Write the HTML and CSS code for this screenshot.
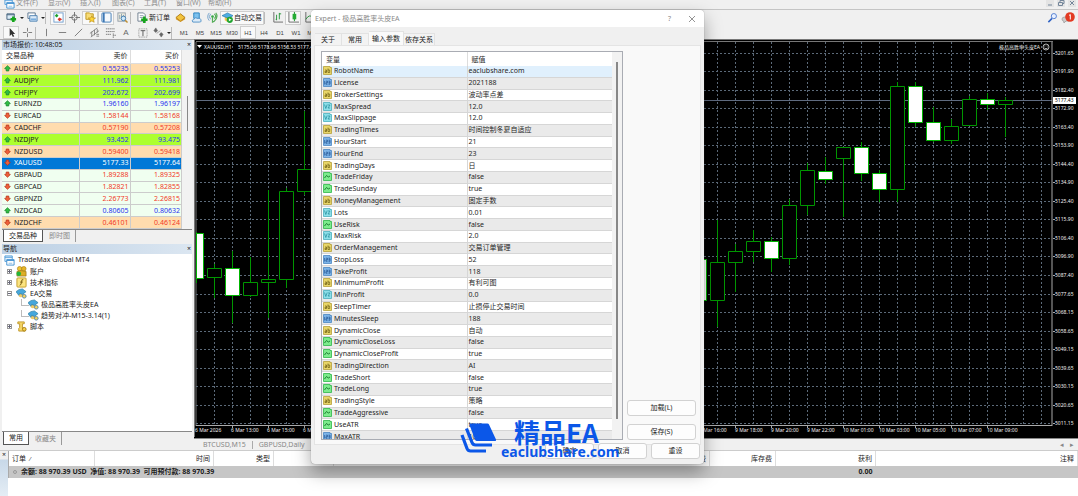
FILE: index.html
```html
<!DOCTYPE html>
<html lang="zh-CN">
<head>
<meta charset="utf-8">
<meta name="viewport" content="width=device-width, initial-scale=1">
<title>TradeMax Global MT4</title>
<link rel="stylesheet" href="styles.css">
</head>
<body>
<svg class="sprite" aria-hidden="true">
  <symbol id="win" viewBox="0 0 12 12"><path d="M1 1h8v6H1z" fill="#eaf4fd" stroke="#4f9bd8"/><path d="M1 2.500h8" stroke="#4f9bd8"/><path d="M3 5h8v6H3z" fill="#fff" stroke="#3f8fd0"/><path d="M3 6h8" stroke="#3f8fd0"/><path d="M5 9h4" stroke="#8fbce2"/></symbol>
  <symbol id="newchart" viewBox="0 0 12 12"><path d="M1 2h8v6H1z" fill="#dcecf8" stroke="#43617c"/><path d="M1 3h8" stroke="#43617c"/><path d="M8 5v6M5 8h6" stroke="#14a51b" stroke-width="2.800"/></symbol>
  <symbol id="profiles" viewBox="0 0 12 12"><path d="M1 1h8v6H1z" fill="#fff" stroke="#55718c"/><path d="M3 4h8v6H3z" fill="#dbeaf8" stroke="#4a7fb0"/><path d="M4 8h6" stroke="#7aaede" stroke-width="2"/></symbol>
  <symbol id="market" viewBox="0 0 12 12"><rect x="1" y="1" width="10" height="10" fill="#fff" stroke="#6e9ccd"/><path d="M2 4l2-2 2 2-2 2z" fill="#19a02a"/><path d="M5 8l2-2 3 2-3 2z" fill="#d9362a"/></symbol>
  <symbol id="target" viewBox="0 0 12 12"><circle cx="6" cy="6" r="3" fill="none" stroke="#707070"/><path d="M6 0v5M6 7v5M0 6h5M7 6h5" stroke="#707070"/></symbol>
  <symbol id="stars" viewBox="0 0 12 12"><path d="M1 1h4l1 1h3v6H1z" fill="#f8dc76" stroke="#be961d"/><path d="M7.500 4l1 2.400 3 .2-2.200 1.800.7 2.800-2.500-1.500L5 11.200l.7-2.800-2.200-1.800 3-.2z" fill="#ffd638" stroke="#b88b16" stroke-width=".7"/></symbol>
  <symbol id="panel" viewBox="0 0 12 12"><rect x="1" y="1" width="10" height="10" rx="1" fill="#f4f8fc" stroke="#3d78b5"/><path d="M3 1v10" stroke="#3d78b5" stroke-width="2"/></symbol>
  <symbol id="tester" viewBox="0 0 12 12"><rect x="1" y="1" width="8" height="9" fill="#fbf7e6" stroke="#8b97a4"/><path d="M3 3v5M5 2v5M7 3v3" stroke="#7b96ab"/><circle cx="7" cy="7" r="2.500" fill="#cfe8fa" stroke="#3d7db2"/><path d="M9 9l2.500 2.500" stroke="#be8d31" stroke-width="1.500"/></symbol>
  <symbol id="order" viewBox="0 0 12 12"><path d="M1 1h6l2 2v7H1z" fill="#fff" stroke="#6c7c8c"/><path d="M3 4h4M3 6h4" stroke="#8c9dab"/><path d="M8 5v7M4.500 8.500h7" stroke="#16a31c" stroke-width="2.800"/></symbol>
  <symbol id="book" viewBox="0 0 12 12"><path d="M1 6l5-4 5 4-5 4z" fill="#f2c33d" stroke="#ad7a13"/><path d="M1 6v2l5 3 5-3V6l-5 4z" fill="#d29320"/></symbol>
  <symbol id="cloud" viewBox="0 0 12 12"><path d="M3 1h6v6H3z" fill="#7dc2ef" stroke="#2580c0"/><path d="M2 11q-2-2 1-3 2-3 4-1 4-1 4 3 0 1-2 1z" fill="#dcebf8" stroke="#4f91c6"/></symbol>
  <symbol id="signal" viewBox="0 0 12 12"><circle cx="6" cy="5" r="1.500" fill="#3aa84a"/><path d="M4 8Q1 5 4 2M2.500 9.500Q-1 5 2.500 1" fill="none" stroke="#6f9fc9"/><path d="M8 2q3 3 0 5M9.500 1Q13 5 8 10l-2 1V6" fill="none" stroke="#55ad58" stroke-width="1.300"/></symbol>
  <symbol id="robot" viewBox="0 0 12 12"><path d="M3 5h6v4q-3 3-6 0z" fill="#f2c64d"/><path d="M0 4l6-3 6 3-5 3z" fill="#4eade2" stroke="#2679ac" stroke-width=".7"/><circle cx="8.500" cy="8.500" r="3.400" fill="#23a532"/><path d="M7.500 6.800v3.400L10.500 8.500z" fill="#fff"/></symbol>
  <symbol id="expert" viewBox="0 0 12 12"><path d="M3 5h5v4q-3 2-5 0z" fill="#efc968"/><path d="M0 4q3-3 7-3l4 3-4 3-3-1-1 2z" fill="#45a7dc" stroke="#26799f" stroke-width=".7"/><circle cx="9" cy="9" r="2" fill="#f6d35b" stroke="#5688a9"/></symbol>
  <symbol id="bars" viewBox="0 0 12 12"><path d="M2 0v11h10" fill="none" stroke="#666"/><path d="M5 3v6M4 8h1M8 1v7M8 2h2" stroke="#249338" fill="none"/></symbol>
  <symbol id="candle" viewBox="0 0 12 12"><path d="M1 0v11h11" fill="none" stroke="#666"/><path d="M7 0v10" stroke="#138c22"/><rect x="5" y="2" width="4" height="6" fill="#26ad35"/></symbol>
  <symbol id="line" viewBox="0 0 12 12"><path d="M2 0v11h10" fill="none" stroke="#666"/><path d="M2 8q4-7 9-1" stroke="#249338" fill="none"/></symbol>
  <symbol id="cursor" viewBox="0 0 12 12"><path d="M4 1v9l2-2 1.500 3 1.500-1-1.500-2.500H10z" fill="#333"/></symbol>
  <symbol id="cross" viewBox="0 0 12 12"><path d="M6 1v4M6 7v4M1 6h4M7 6h4" stroke="#777"/></symbol>
  <symbol id="vline" viewBox="0 0 12 12"><path d="M6 2v8" stroke="#777"/></symbol>
  <symbol id="hline" viewBox="0 0 12 12"><path d="M2 6h8" stroke="#777"/></symbol>
  <symbol id="trend" viewBox="0 0 12 12"><path d="M2 10l8-8" stroke="#777"/></symbol>
  <symbol id="channel" viewBox="0 0 12 12"><path d="M1 7l8-6M2 11l9-7M3 5v5M6 3v6M9 2v4M8 8h3M8 10h3" stroke="#777" stroke-width=".9"/></symbol>
  <symbol id="fibo" viewBox="0 0 12 12"><path d="M1 2h10M1 5h10M1 8h6M9 7v5M9 9h3" stroke="#777" stroke-dasharray="1.500 .5"/></symbol>
  <symbol id="label" viewBox="0 0 12 12"><rect x="2" y="2" width="9" height="9" fill="none" stroke="#888" stroke-dasharray="1 1"/><path d="M4 4h5M6.500 4v6" stroke="#555"/></symbol>
  <symbol id="shapes" viewBox="0 0 12 12"><path d="M1 4l2-3 2 3-2 2zM7 8l2-2 2 2-2 3zM4 7l4-3" fill="#666" stroke="#666" stroke-width=".6"/></symbol>
  <symbol id="up" viewBox="0 0 8 8"><path d="M4 .8L7.300 4 5.500 4.600V6.800h-3V4.600L.7 4z" fill="#2fbe42" stroke="#16802a" stroke-width=".8"/></symbol>
  <symbol id="down" viewBox="0 0 8 8"><path d="M4 7.200L7.300 4 5.500 3.400V1.200h-3v2.200L.7 4z" fill="#ee5f3a" stroke="#b52e16" stroke-width=".8"/></symbol>
  <symbol id="users" viewBox="0 0 12 12"><circle cx="4" cy="3" r="2.500" fill="#efc333" stroke="#a87d14" stroke-width=".7"/><circle cx="8.500" cy="3" r="2.500" fill="#e7b526" stroke="#a87d14" stroke-width=".7"/><path d="M1 6q4-2 10 0v5H1z" fill="#dcae27" stroke="#95700f" stroke-width=".7"/><circle cx="3" cy="8.500" r="2.500" fill="#21b53b"/></symbol>
  <symbol id="func" viewBox="0 0 12 12"><rect x="1" y="1" width="10" height="10" rx="1" fill="#fbe481" stroke="#c39c27"/><path d="M8 3Q6 2 6 5 6 9 4 9M4.500 5.500h3" fill="none" stroke="#765b10"/></symbol>
  <symbol id="script" viewBox="0 0 12 12"><path d="M2 1h7v2H7v5h3v3H3V8l1-1V3H2z" fill="#f8d967" stroke="#bd9527"/><circle cx="9" cy="9" r="2" fill="#f5d14a" stroke="#a67d16"/></symbol>
  <symbol id="t-ab" viewBox="0 0 9 9"><path d="M.5.500h6.500v1h1.500v7h-8z" fill="#e9d668" stroke="#b5a03a" stroke-width=".8"/><path d="M2 4h1.500v2.500H2V5.300h1.500M5 2.500v4h1.700V4H5" fill="none" stroke="#6b5b12" stroke-width=".7"/></symbol>
  <symbol id="t-int" viewBox="0 0 9 9"><path d="M.5.500h6.500v1h1.500v7h-8z" fill="#7db4e8" stroke="#4a86c2" stroke-width=".8"/><path d="M1.700 3v3.500M3 3.200h1.500v1.500H3v1.500h1.500M5.500 3.200H7v3H5.500M5.500 4.700H7" fill="none" stroke="#1b4c8d" stroke-width=".7"/></symbol>
  <symbol id="t-dbl" viewBox="0 0 9 9"><path d="M.5.500h6.500v1h1.500v7h-8z" fill="#8cdfe9" stroke="#49afbd" stroke-width=".8"/><path d="M1.500 2.500l1.300 4 1.400-4M5 3h2L5 6h2" fill="none" stroke="#238b9b" stroke-width=".7"/></symbol>
  <symbol id="t-bool" viewBox="0 0 9 9"><path d="M.5.500h6.500v1h1.500v7h-8z" fill="#7ceb8c" stroke="#2db649" stroke-width=".8"/><path d="M1.500 6l2-2.500L5.300 5 7 4" fill="none" stroke="#127428" stroke-width=".9"/></symbol>
</svg>

<nav class="menubar">
  <svg class="icon"><use href="#win"/></svg>
  <a href="#file">文件(F)</a><a href="#view">显示(V)</a><a href="#insert">插入(I)</a><a href="#charts">图表(C)</a><a href="#tools">工具(T)</a><a href="#window">窗口(W)</a><a href="#help">帮助(H)</a>
  <div class="mdi"><button aria-label="最小化"><svg viewBox="0 0 8 8"><path d="M2 6h4"/></svg></button><button aria-label="还原"><svg viewBox="0 0 8 8"><path d="M1.500 3.500h4v3h-4zM3 3V1.500h4v3H6"/></svg></button><button aria-label="关闭"><svg viewBox="0 0 8 8"><path d="M2 2l4 4M6 2L2 6"/></svg></button></div>
</nav>

<div class="toolbar">
  <button class="tool" aria-label="新图表"><svg class="icon"><use href="#newchart"/></svg></button><span class="caret"></span>
  <button class="tool" aria-label="配置"><svg class="icon"><use href="#profiles"/></svg></button><span class="caret"></span>
  <span class="sep"></span>
  <button class="tool on" aria-label="市场报价"><svg class="icon"><use href="#market"/></svg></button>
  <button class="tool" aria-label="数据窗口"><svg class="icon"><use href="#target"/></svg></button>
  <button class="tool on" aria-label="导航"><svg class="icon"><use href="#stars"/></svg></button>
  <button class="tool on" aria-label="终端"><svg class="icon"><use href="#panel"/></svg></button>
  <button class="tool" aria-label="测试"><svg class="icon"><use href="#tester"/></svg></button>
  <span class="sep"></span>
  <button class="tool order"><svg class="icon"><use href="#order"/></svg>新订单</button>
  <button class="tool" aria-label="编辑器"><svg class="icon"><use href="#book"/></svg></button>
  <button class="tool" aria-label="社区"><svg class="icon"><use href="#cloud"/></svg></button>
  <button class="tool" aria-label="信号"><svg class="icon"><use href="#signal"/></svg></button>
  <button class="tool auto on"><svg class="icon"><use href="#robot"/></svg>自动交易</button>
  <span class="sep"></span>
  <button class="tool" aria-label="柱状图"><svg class="icon"><use href="#bars"/></svg></button>
  <button class="tool on" aria-label="蜡烛图"><svg class="icon"><use href="#candle"/></svg></button>
  <button class="tool" aria-label="折线图"><svg class="icon"><use href="#line"/></svg></button>
  <div class="right">
    <button class="tool" aria-label="搜索"><svg class="icon" viewBox="0 0 12 12"><path d="M1.500 11l4-4" stroke="#2f62c4" stroke-width="1.700"/><circle cx="7.500" cy="4.500" r="2.800" fill="#e8f0ff" stroke="#4b79cf"/></svg></button>
    <button class="tool" aria-label="通知"><svg class="bell" viewBox="0 0 14 12"><path d="M1 7q0-2 3-2h4v4H5l-2 2-.3-2Q1 9 1 7z" fill="#ccc" stroke="#aaa"/><circle cx="9" cy="5" r="4.800" fill="#e23a22"/><path d="M8 3.500L9.300 2.500v5" stroke="#fff" fill="none"/></svg></button>
  </div>
</div>

<div class="toolbar low">
  <button class="tool on" aria-label="光标"><svg class="icon"><use href="#cursor"/></svg></button>
  <button class="tool" aria-label="十字线"><svg class="icon"><use href="#cross"/></svg></button>
  <span class="sep thin"></span>
  <button class="tool" aria-label="垂直线"><svg class="icon"><use href="#vline"/></svg></button>
  <button class="tool" aria-label="水平线"><svg class="icon"><use href="#hline"/></svg></button>
  <button class="tool" aria-label="趋势线"><svg class="icon"><use href="#trend"/></svg></button>
  <button class="tool" aria-label="通道"><svg class="icon"><use href="#channel"/></svg></button>
  <button class="tool" aria-label="斐波那契"><svg class="icon"><use href="#fibo"/></svg></button>
  <button class="tool letter">A</button>
  <button class="tool" aria-label="标签"><svg class="icon"><use href="#label"/></svg></button>
  <button class="tool" aria-label="形状"><svg class="icon"><use href="#shapes"/></svg></button><span class="caret"></span>
  <span class="sep"></span>
  <button class="tool">M1</button><button class="tool">M5</button><button class="tool">M15</button><button class="tool">M30</button><button class="tool on">H1</button><button class="tool">H4</button><button class="tool">D1</button><button class="tool">W1</button><button class="tool">MN</button>
</div>

<main class="workspace">
  <aside class="side">
    <section class="panel market">
      <header class="bar"><h2>市场报价: 10:48:05</h2><button aria-label="关闭">×</button></header>
      <div class="scroll">
        <table class="quotes">
          <thead><tr><th>交易品种</th><th>卖价</th><th>买价</th></tr></thead>
          <tbody>
            <tr class="peach"><td><svg><use href="#up"/></svg>AUDCHF</td><td>0.55235</td><td>0.55253</td></tr>
            <tr class="lime"><td><svg><use href="#up"/></svg>AUDJPY</td><td>111.962</td><td>111.981</td></tr>
            <tr class="lime"><td><svg><use href="#up"/></svg>CHFJPY</td><td>202.672</td><td>202.699</td></tr>
            <tr><td><svg><use href="#up"/></svg>EURNZD</td><td>1.96160</td><td>1.96197</td></tr>
            <tr class="fall"><td><svg><use href="#down"/></svg>EURCAD</td><td>1.58144</td><td>1.58168</td></tr>
            <tr class="fall peach"><td><svg><use href="#down"/></svg>CADCHF</td><td>0.57190</td><td>0.57208</td></tr>
            <tr class="lime"><td><svg><use href="#up"/></svg>NZDJPY</td><td>93.452</td><td>93.475</td></tr>
            <tr class="fall peach"><td><svg><use href="#down"/></svg>NZDUSD</td><td>0.59400</td><td>0.59418</td></tr>
            <tr class="picked"><td><svg><use href="#down"/></svg>XAUUSD</td><td>5177.33</td><td>5177.64</td></tr>
            <tr class="fall"><td><svg><use href="#down"/></svg>GBPAUD</td><td>1.89288</td><td>1.89325</td></tr>
            <tr class="fall"><td><svg><use href="#down"/></svg>GBPCAD</td><td>1.82821</td><td>1.82855</td></tr>
            <tr class="fall"><td><svg><use href="#down"/></svg>GBPNZD</td><td>2.26773</td><td>2.26815</td></tr>
            <tr><td><svg><use href="#up"/></svg>NZDCAD</td><td>0.80605</td><td>0.80632</td></tr>
            <tr class="fall peach"><td><svg><use href="#down"/></svg>NZDCHF</td><td>0.46101</td><td>0.46124</td></tr>
          </tbody>
        </table>
        <div class="track"><div class="thumb"></div></div>
      </div>
      <div class="tabs"><button class="active">交易品种</button><button>即时图</button></div>
    </section>
    <section class="panel nav">
      <header class="bar"><h2>导航</h2><button aria-label="关闭">×</button></header>
      <div class="tree">
        <div class="node root"><svg class="icon"><use href="#win"/></svg>TradeMax Global MT4</div>
        <div class="node"><i class="box plus"></i><svg class="icon"><use href="#users"/></svg>账户</div>
        <div class="node"><i class="box plus"></i><svg class="icon"><use href="#func"/></svg>技术指标</div>
        <div class="node"><i class="box"></i><svg class="icon"><use href="#expert"/></svg>EA交易</div>
        <div class="node leaf"><svg class="icon"><use href="#expert"/></svg>极品高胜率头皮EA</div>
        <div class="node leaf"><svg class="icon"><use href="#expert"/></svg>趋势对冲-M15-3.14(1)</div>
        <div class="node"><i class="box plus"></i><svg class="icon"><use href="#script"/></svg>脚本</div>
      </div>
      <div class="tabs"><button class="active">常用</button><button>收藏夹</button></div>
    </section>
  </aside>

  <section class="charts">
    <svg class="chart" viewBox="194 39 884 399" preserveAspectRatio="none" role="img" aria-label="XAUUSD H1">
      <rect x="194" y="39" width="884" height="399" fill="#000"/>
      <path d="M194 39.500h884M194.500 39v398" stroke="#777"/>
      <path d="M196 42v384M196 41.500h857" stroke="#777" fill="none"/>
      <path class="grid" d="M214.500 42V425M232.500 42V425M250.500 42V425M268.500 42V425M286.500 42V425M304.500 42V425M717.500 42V425M735.500 42V425M753.500 42V425M771.500 42V425M789.500 42V425M807.500 42V425M825.500 42V425M843.500 42V425M861.500 42V425M879.500 42V425M897.500 42V425M915.500 42V425M933.500 42V425M951.500 42V425M969.500 42V425M987.500 42V425M1005.500 42V425M1023.500 42V425M1041.500 42V425"/>
      <path class="grid" d="M196 53.500H1052M196 71.500H1052M196 90.500H1052M196 108.500H1052M196 127.500H1052M196 145.500H1052M196 164.500H1052M196 182.500H1052M196 201.500H1052M196 219.500H1052M196 238.500H1052M196 256.500H1052M196 275.500H1052M196 294.500H1052M196 312.500H1052M196 331.500H1052M196 349.500H1052M196 368.500H1052M196 386.500H1052M196 405.500H1052M196 423.500H1052"/>
      <path d="M196 100.500H1052" stroke="#5f6b80"/>
      <path class="wick" d="M196.500 232V283M214.500 264V298M232.500 251V323M250.500 257V297M268.500 190V318M286.500 188V288M304.500 111V195M717.500 220V327M735.500 244V292M753.500 230V262M771.500 237V272M789.500 199V265M807.500 163V215M825.500 157V184M843.500 147V217M861.500 142V181M879.500 170V202M897.500 82V202M915.500 82V127M933.500 107V142M951.500 119V144M969.500 96V125M987.500 93V110M1005.500 97V137"/>
      <path class="hollow" d="M207.500 268.500h14v9h-14zM243.500 282.500h14v13h-14zM261.500 279.500h14v3h-14zM279.500 191.500h14v88h-14zM297.500 169.500h14v22h-14zM710.500 262.500h14v38h-14zM728.500 251.500h14v11h-14zM746.500 241.500h14v10h-14zM782.500 205.500h14v53h-14zM800.500 170.500h14v35h-14zM836.500 147.500h14v11h-14zM890.500 86.500h14v103h-14zM944.500 126.500h14v14h-14zM962.500 99.500h14v26h-14zM998.500 100.500h14v4h-14z"/>
      <path class="filled" d="M196.500 233.500h7v45h-7zM225.500 268.500h14v27h-14zM692.500 259.500h14v41h-14zM764.500 241.500h14v17h-14zM818.500 171.500h14v8h-14zM854.500 147.500h14v26h-14zM872.500 173.500h14v16h-14zM908.500 86.500h14v36h-14zM926.500 122.500h14v18h-14zM980.500 99.500h14v5h-14z"/>
      <path d="M1052 42V426M196 425.500H1052" stroke="#aaa"/>
      <path d="M1053 53.500h2M1053 71.500h2M1053 90.500h2M1053 108.500h2M1053 127.500h2M1053 145.500h2M1053 164.500h2M1053 182.500h2M1053 201.500h2M1053 219.500h2M1053 238.500h2M1053 256.500h2M1053 275.500h2M1053 294.500h2M1053 312.500h2M1053 331.500h2M1053 349.500h2M1053 368.500h2M1053 386.500h2M1053 405.500h2M1053 423.500h2M232.500 426v2M268.500 426v2M304.500 426v2M735.500 426v2M771.500 426v2M807.500 426v2M843.500 426v2M879.500 426v2M915.500 426v2M951.500 426v2M987.500 426v2" stroke="#aaa"/>
      <path d="M197 45h5l-2.500 3z" fill="#fff"/>
      <g class="lbl">
        <text x="204" y="49">XAUUSD,H1</text><text x="238" y="49">5175.36 5178.96 5158.53 5177.43</text>
        <text x="999" y="49">极品高胜率头皮EA</text>
        <text x="1055" y="55">5201.65</text><text x="1055" y="73">5191.90</text><text x="1055" y="92">5182.40</text><text x="1055" y="110">5172.90</text><text x="1055" y="129">5163.40</text><text x="1055" y="147">5153.90</text><text x="1055" y="166">5144.40</text><text x="1055" y="184">5134.90</text><text x="1055" y="203">5125.40</text><text x="1055" y="221">5115.90</text><text x="1055" y="240">5106.40</text><text x="1055" y="258">5096.90</text><text x="1055" y="277">5087.40</text><text x="1055" y="296">5077.65</text><text x="1055" y="314">5068.15</text><text x="1055" y="333">5058.65</text><text x="1055" y="351">5049.15</text><text x="1055" y="370">5039.65</text><text x="1055" y="388">5030.15</text><text x="1055" y="407">5020.65</text><text x="1055" y="425">5011.15</text>
        <text x="195" y="432">6 Mar 2026</text><text x="231" y="432">6 Mar 13:00</text><text x="267" y="432">6 Mar 15:00</text><text x="303" y="432">6 Mar 17:00</text>
        <text x="699" y="432">9 Mar 16:00</text><text x="735" y="432">9 Mar 18:00</text><text x="771" y="432">9 Mar 20:00</text><text x="807" y="432">9 Mar 22:00</text><text x="843" y="432">10 Mar 01:00</text><text x="879" y="432">10 Mar 03:00</text><text x="915" y="432">10 Mar 05:00</text><text x="951" y="432">10 Mar 07:00</text><text x="987" y="432">10 Mar 09:00</text>
      </g>
      <g fill="none" stroke="#ddd" stroke-width=".8"><circle cx="1046" cy="47" r="3"/><path d="M1044.300 48q1.700 1.600 3.400 0M1044.800 45.500v.9M1047.200 45.500v.9"/></g>
      <rect x="1053" y="97" width="23" height="7" fill="#fff"/><text class="now" x="1055" y="102">5177.43</text>
    </svg>
    <div class="charttabs"><button>BTCUSD,M15</button><button>GBPUSD,Daily</button><span class="arrows"><button aria-label="向左">◂</button><button aria-label="向右">▸</button></span></div>
  </section>
</main>

<section class="terminal">
  <div class="grip"><button aria-label="关闭">×</button></div>
  <table class="orders">
    <colgroup><col class="c86"><col class="c119"><col class="c60"><col class="c60"><col><col class="c66"><col class="c100"><col class="c200"></colgroup>
    <thead><tr><th>订单 &nbsp;<small>⁄</small></th><th>时间</th><th>类型</th><th>手数</th><th>手续费</th><th>库存费</th><th>获利</th><th>注释</th></tr></thead>
    <tbody><tr><td colspan="6"><span class="dot"></span>余额: 88 970.39 USD &nbsp;净值: 88 970.39 &nbsp;可用预付款: 88 970.39</td><td>0.00</td><td></td></tr></tbody>
  </table>
</section>

<section class="dialog" role="dialog" aria-label="Expert">
  <header class="title"><h1>Expert - 极品高胜率头皮EA</h1><button aria-label="帮助">?</button><button aria-label="关闭"><svg viewBox="0 0 8 8"><path d="M1 1l6 6M7 1l-6 6" stroke="#888" stroke-width=".9"/></svg></button></header>
  <div class="dtabs"><button>关于</button><button>常用</button><button class="active">输入参数</button><button>依存关系</button></div>
  <div class="page">
    <div class="list">
      <table class="inputs">
        <thead><tr><th>变量</th><th>赋值</th></tr></thead>
        <tbody>
          <tr class="sel"><td><svg><use href="#t-ab"/></svg>RobotName</td><td>eaclubshare.com</td></tr>
          <tr><td><svg><use href="#t-int"/></svg>License</td><td>2021188</td></tr>
          <tr><td><svg><use href="#t-ab"/></svg>BrokerSettings</td><td>波动率点差</td></tr>
          <tr><td><svg><use href="#t-dbl"/></svg>MaxSpread</td><td>12.0</td></tr>
          <tr><td><svg><use href="#t-dbl"/></svg>MaxSlippage</td><td>12.0</td></tr>
          <tr><td><svg><use href="#t-ab"/></svg>TradingTimes</td><td>时间控制冬夏自适应</td></tr>
          <tr><td><svg><use href="#t-int"/></svg>HourStart</td><td>21</td></tr>
          <tr><td><svg><use href="#t-int"/></svg>HourEnd</td><td>23</td></tr>
          <tr><td><svg><use href="#t-ab"/></svg>TradingDays</td><td>日</td></tr>
          <tr><td><svg><use href="#t-bool"/></svg>TradeFriday</td><td>false</td></tr>
          <tr><td><svg><use href="#t-bool"/></svg>TradeSunday</td><td>true</td></tr>
          <tr><td><svg><use href="#t-ab"/></svg>MoneyManagement</td><td>固定手数</td></tr>
          <tr><td><svg><use href="#t-dbl"/></svg>Lots</td><td>0.01</td></tr>
          <tr><td><svg><use href="#t-bool"/></svg>UseRisk</td><td>false</td></tr>
          <tr><td><svg><use href="#t-dbl"/></svg>MaxRisk</td><td>2.0</td></tr>
          <tr><td><svg><use href="#t-ab"/></svg>OrderManagement</td><td>交易订单管理</td></tr>
          <tr><td><svg><use href="#t-int"/></svg>StopLoss</td><td>52</td></tr>
          <tr><td><svg><use href="#t-int"/></svg>TakeProfit</td><td>118</td></tr>
          <tr><td><svg><use href="#t-ab"/></svg>MinimumProfit</td><td>有利可图</td></tr>
          <tr><td><svg><use href="#t-dbl"/></svg>MinProfit</td><td>0.0</td></tr>
          <tr><td><svg><use href="#t-ab"/></svg>SleepTimer</td><td>止损停止交易时间</td></tr>
          <tr><td><svg><use href="#t-int"/></svg>MinutesSleep</td><td>188</td></tr>
          <tr><td><svg><use href="#t-ab"/></svg>DynamicClose</td><td>自动</td></tr>
          <tr><td><svg><use href="#t-bool"/></svg>DynamicCloseLoss</td><td>false</td></tr>
          <tr><td><svg><use href="#t-bool"/></svg>DynamicCloseProfit</td><td>true</td></tr>
          <tr><td><svg><use href="#t-ab"/></svg>TradingDirection</td><td>AI</td></tr>
          <tr><td><svg><use href="#t-bool"/></svg>TradeShort</td><td>false</td></tr>
          <tr><td><svg><use href="#t-bool"/></svg>TradeLong</td><td>true</td></tr>
          <tr><td><svg><use href="#t-ab"/></svg>TradingStyle</td><td>策略</td></tr>
          <tr><td><svg><use href="#t-bool"/></svg>TradeAggressive</td><td>false</td></tr>
          <tr><td><svg><use href="#t-bool"/></svg>UseATR</td><td>true</td></tr>
          <tr><td><svg><use href="#t-int"/></svg>MaxATR</td><td>10</td></tr>
        </tbody>
      </table>
      <div class="track"><div class="thumb"></div></div>
    </div>
    <div class="side-actions"><button class="btn">加载(L)</button><button class="btn">保存(S)</button></div>
  </div>
  <footer class="actions"><button class="btn">确定</button><button class="btn">取消</button><button class="btn">重设</button></footer>
  <div class="mark">
    <svg viewBox="0 0 38 32"><path d="M11.500 1.500h17q1 0 1.500 1l7 15q.5 1.500-1 1.500H18q-1.500 0-2-1.500L10.500 3z" fill="#0b57e8"/><path d="M7.500 6.500l5.500 14q1 2.500 3.500 2.500H33M3 13l5 13.500q1 2.500 3.500 2.500H27" fill="none" stroke="#0b57e8" stroke-width="3.200"/></svg>
    <p><strong>精品EA</strong><span>eaclubshare.com</span></p>
  </div>
</section>
</body>
</html>
```

FILE: styles.css
```css
* { box-sizing: border-box; }
html, body { margin: 0; height: 100%; }
body {
  position: relative;
  display: flex;
  flex-direction: column;
  min-height: 100vh;
  overflow: hidden;
  background: #f0f0f0;
  color: #1c1c1c;
  font: 7px/10px "Noto Sans", "Noto Sans CJK SC", sans-serif;
}
h1, h2, p { margin: 0; font: inherit; }
button {
  margin: 0;
  padding: 0;
  border: 0;
  background: none;
  color: inherit;
  font: inherit;
}
table { border-collapse: collapse; }
th, td { padding: 0; font-weight: 400; white-space: nowrap; }
.sprite { position: absolute; width: 0; height: 0; }
.icon { width: 11px; height: 11px; flex: none; }

.menubar {
  display: flex;
  align-items: center;
  flex: none;
  height: 10px;
  padding: 0 2px 3px 4px;
  overflow: hidden;
  border-bottom: 1px solid #c4c4c4;
  color: #8e8e8e;
}
.menubar a { width: 32px; color: inherit; text-decoration: none; white-space: nowrap; }
.menubar .icon { margin-right: 1px; }
.mdi { display: flex; gap: 3px; margin-left: auto; }
.mdi button { width: 8px; height: 8px; background: #e4e4e4; }
.mdi svg { display: block; width: 8px; height: 8px; fill: none; stroke: #75869a; }

.toolbar { display: flex; align-items: center; flex: none; height: 15px; padding-left: 3px; }
.toolbar.low { height: 14px; padding-top: 1px; color: #444; font-size: 6px; font-family: "Liberation Sans", sans-serif; }
.tool { display: flex; align-items: center; justify-content: center; width: 16px; height: 14px; flex: none; }
.low .tool { height: 13px; }
.tool.letter { font-size: 8px; color: #666; }
.tool.on { border: 1px solid #cfcfcf; background: #f9f9f9; }
.tool.order { width: 37px; gap: 1px; }
.tool.auto { width: 44px; gap: 1px; }
.caret { display: flex; justify-content: center; width: 5px; }
.caret::before { content: ""; border: solid transparent; border-width: 2px 2px 0; border-top-color: #222; }
.sep { width: 5px; height: 12px; border-left: 1px solid #bbb; }
.sep.thin { width: 3px; }
.right { display: flex; margin-left: auto; padding-right: 2px; }
.bell { width: 14px; height: 12px; }

.workspace { display: flex; flex: 1; min-height: 0; }
.side { display: flex; flex-direction: column; flex: none; width: 194px; padding: 0 2px 3px; gap: 1px; border-top: 1px solid #aaa; }
.panel { display: flex; flex-direction: column; min-height: 0; width: 190px; }
.market { flex: none; height: 203px; }
.nav { flex: 1; }
.bar { display: flex; justify-content: space-between; align-items: center; flex: none; height: 10px; padding: 0 1px; background: linear-gradient(90deg, #bcd0e4, #dbe6f1); }
.scroll { display: flex; flex: 1; min-height: 0; overflow: hidden; border-bottom: 1px solid #888; }
.quotes { width: 180px; height: 179px; table-layout: fixed; background: #f0fff0; }
.quotes th { height: 13px; background: #fff; border: 1px solid #ddd; border-width: 0 1px 1px 0; text-align: right; padding-right: 2px; }
.quotes th:first-child { width: 77px; text-align: left; padding-left: 4px; }
.quotes th:nth-child(2) { width: 51px; }
.quotes td { border: 1px solid #ccc; border-width: 0 1px 1px 0; text-align: right; color: #2a33ef; padding-right: 1px; }
.quotes td:first-child { text-align: left; color: #222; }
.quotes svg { width: 7px; height: 7px; margin: 0 3px 0 2px; vertical-align: -1px; }
.quotes .peach { background: #ffdcae; }
.quotes .lime { background: #adff2f; }
.quotes .fall td + td { color: #f23a28; }
.quotes .picked { background: #0078d7; }
.quotes .picked td, .quotes .picked td:first-child { color: #fff; }
.track { flex: 1; display: flex; justify-content: center; background: #f2f2f2; }
.market .thumb { width: 1px; height: 35px; margin-top: 46px; background: #888; }
.tabs { display: flex; flex: none; height: 13px; padding-left: 1px; }
.tabs button { height: 12px; padding: 0 5px; color: #888; border-right: 1px solid #999; margin-right: 1px; }
.tabs .active { background: #fff; color: #222; border: 1px solid #555; border-top: 0; }
.tree { position: relative; flex: 1; background: #fff; border-bottom: 1px solid #888; }
.node { position: relative; display: flex; align-items: center; gap: 3px; height: 11px; padding-left: 5px; }
.node.root { height: 12px; padding-left: 2px; }
.node.leaf { padding-left: 26px; gap: 2px; }
.node.leaf::before { content: ""; position: absolute; left: 19px; top: 0; width: 7px; height: 6px; border: solid #bbb; border-width: 0 0 1px 1px; }
.box { position: relative; width: 5px; height: 5px; border: 1px solid #999; margin-right: 1px; background: linear-gradient(#667, #667) center / 3px 1px no-repeat; }
.box.plus { background: linear-gradient(#667, #667) center / 3px 1px no-repeat, linear-gradient(#667, #667) center / 1px 3px no-repeat; }
.nav .tabs { height: 15px; }
.nav .tabs button { height: 13px; }

.charts { display: flex; flex-direction: column; flex: 1; min-width: 0; }
.chart { display: block; flex: 1; width: 100%; min-height: 0; }
.grid { fill: none; stroke: #5c6a79; stroke-dasharray: 2 2; }
.wick { fill: none; stroke: #009600; }
.hollow { fill: #000; stroke: #009600; }
.filled { fill: #fff; stroke: #00b400; }
.lbl text, .now { font: 5px "Noto Sans", "Noto Sans CJK SC", sans-serif; fill: #f0f0f0; }
.lbl ~ .now { fill: #000; }
.charttabs { display: flex; align-items: center; flex: none; height: 12px; padding-left: 3px; border-top: 1px solid #888; color: #888; }
.charttabs > button { padding: 0 6px; border-right: 1px solid #aaa; line-height: 8px; }
.charttabs > button:nth-child(2) { border: 0; }
.arrows { display: flex; gap: 6px; margin-left: auto; padding-right: 4px; }

.terminal { display: flex; flex: none; height: 46px; background: #fff; border-top: 1px solid #ccc; }
.grip { flex: none; width: 8px; background: linear-gradient(#f0f0f0 8px, #c8d8e8 9px, #e4edf5); text-align: center; }
.grip button { display: block; width: 8px; height: 8px; line-height: 8px; }
.orders { width: 100%; table-layout: fixed; align-self: flex-start; border-left: 1px solid #aaa; }
.orders th { height: 15px; padding: 0 3px; text-align: right; border-right: 1px solid #ddd; }
.orders th:first-child { text-align: left; }
.orders td { height: 12px; padding: 0 3px; background: #c6c6c6; font-weight: 700; text-align: left; }
.orders td + td { text-align: right; }
.c60 { width: 60px; } .c66 { width: 66px; } .c86 { width: 86px; }
.c100 { width: 100px; } .c119 { width: 119px; } .c200 { width: 202px; }
.dot { display: inline-block; width: 4px; height: 4px; margin: 0 4px 0 1px; border: 1px solid #999; border-radius: 50%; }

.dialog {
  position: absolute;
  left: 311px;
  top: 10px;
  display: flex;
  flex-direction: column;
  width: 393px;
  height: 454px;
  border-radius: 4px;
  background: #f0f0f0;
  box-shadow: 0 0 1px #666, 0 8px 18px rgba(0, 0, 0, .35);
}
.title { display: flex; align-items: center; flex: none; height: 17px; padding: 0 8px 0 4px; gap: 17px; border-radius: 4px 4px 0 0; background: #fff; color: #888; }
.title h1 { flex: 1; }
.title svg { width: 8px; height: 8px; display: block; }
.dtabs { display: flex; align-items: flex-end; flex: none; height: 18px; padding: 0 4px; }
.dtabs button { width: 27px; height: 12px; border: 1px solid #e2e2e2; border-width: 1px 1px 0 0; background: #f3f3f3; }
.dtabs button:nth-child(n+3) { width: 35px; }
.dtabs button:nth-child(4) { width: 31px; }
.dtabs button.active { height: 14px; background: #fafafa; }
.page { display: flex; flex: none; gap: 4px; height: 400px; margin: 0 3px; padding: 5px 6px 4px; border: 1px solid #e4e4e4; background: #f9f9f9; }
.list { display: flex; width: 302px; overflow: hidden; border: 1px solid #a9acb3; background: #fff; flex: none; }
.inputs { width: 290px; height: 391px; flex: none; table-layout: fixed; color: #262626; }
.inputs th { height: 14px; padding: 1px 4px 0; text-align: left; border-right: 1px solid #ddd; }
.inputs th:first-child { width: 145px; }
.inputs td { border: 1px solid #d6d6d6; border-width: 0 1px 1px 0; padding-left: 1px; }
.inputs tr td:last-child, .inputs tr th:last-child { border-right: 0; }
.inputs tbody tr:nth-child(even) { background: #eaeaea; }
.inputs tbody .sel { background: #e0f0fd; }
.inputs svg { width: 9px; height: 9px; margin-right: 2px; vertical-align: -2px; }
.list .thumb { width: 2px; height: 357px; margin-top: 10px; background: #888; }
.side-actions { display: flex; flex: 1; flex-direction: column; justify-content: flex-end; gap: 8px; }
.btn { height: 16px; border: 1px solid #d2d2d2; border-radius: 3px; background: #fdfdfd; }
.side-actions .btn { width: 69px; }
.actions { display: flex; justify-content: flex-end; gap: 4px; padding: 0 4px; margin-top: -2px; }
.actions .btn { width: 49px; }
.mark { position: absolute; left: 148px; top: 412px; display: flex; color: #0b57e8; font-weight: 700; pointer-events: none; }
.mark svg { width: 38px; height: 32px; }
.mark p { display: flex; flex-direction: column; margin-left: 4px; }
.mark strong { padding-left: 13px; font: 700 26px/20px "Noto Sans CJK SC", sans-serif; }
.mark span { font: 700 14px/20px "Noto Sans", sans-serif; }
```
